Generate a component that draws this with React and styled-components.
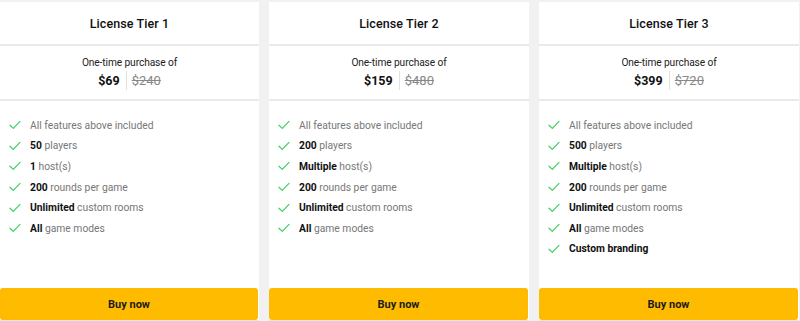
import { styled, createGlobalStyle } from "styled-components";

const GlobalStyle = createGlobalStyle`
  html, body {
    margin: 0;
    padding: 0;
    background: #f1f1f2;
    font-family: Roboto, "Liberation Sans", Arial, sans-serif;
  }
`;

const tiers = [
  {
    name: "License Tier 1",
    price: "$69",
    was: "$240",
    features: [
      [null, "All features above included"],
      ["50", "players"],
      ["1", "host(s)"],
      ["200", "rounds per game"],
      ["Unlimited", "custom rooms"],
      ["All", "game modes"],
    ],
  },
  {
    name: "License Tier 2",
    price: "$159",
    was: "$480",
    features: [
      [null, "All features above included"],
      ["200", "players"],
      ["Multiple", "host(s)"],
      ["200", "rounds per game"],
      ["Unlimited", "custom rooms"],
      ["All", "game modes"],
    ],
  },
  {
    name: "License Tier 3",
    price: "$399",
    was: "$720",
    features: [
      [null, "All features above included"],
      ["500", "players"],
      ["Multiple", "host(s)"],
      ["200", "rounds per game"],
      ["Unlimited", "custom rooms"],
      ["All", "game modes"],
      ["Custom branding", null],
    ],
  },
];

const Check = () => (
  <svg width="12" height="10" viewBox="0 0 12 10" fill="none">
    <path d="M1 5.2 L4.3 8.4 L11 1.4" stroke="#3fcf62" strokeWidth="1.2" strokeLinecap="round" strokeLinejoin="round" />
  </svg>
);

export default function App() {
  return (
    <>
      <GlobalStyle />
      <Plans>
        {tiers.map((t) => (
          <Card key={t.name}>
            <Title>{t.name}</Title>
            <PriceBlock>
              <Label>One-time purchase of</Label>
              <PriceRow>
                <Price>{t.price}</Price>
                <Was>{t.was}</Was>
              </PriceRow>
            </PriceBlock>
            <Features>
              {t.features.map(([strong, rest], i) => (
                <Feature key={i}>
                  <Check />
                  <span>
                    {strong && <b>{strong}</b>}
                    {strong && rest ? " " : ""}
                    {rest}
                  </span>
                </Feature>
              ))}
            </Features>
            <BuyButton>Buy now</BuyButton>
          </Card>
        ))}
      </Plans>
    </>
  );
}

const Plans = styled.div`
  display: grid;
  grid-template-columns: 259px 260px 260px;
  column-gap: 10px;
  padding-top: 2px;
  height: 319px;
  box-sizing: content-box;
`;

const Card = styled.div`
  display: flex;
  flex-direction: column;
  background: #fff;
  border-bottom: 1px solid #e3e8f3;
`;

const Title = styled.div`
  height: 42px;
  display: flex;
  align-items: center;
  justify-content: center;
  font-size: 12.5px;
  font-weight: 500;
  letter-spacing: 0.1px;
  color: #111;
  border-bottom: 2px solid #e9e9ef;
`;

const PriceBlock = styled.div`
  height: 55px;
  display: flex;
  flex-direction: column;
  align-items: center;
  padding-top: 11px;
  box-sizing: border-box;
  border-bottom: 2px solid #e9e9ef;
`;

const Label = styled.div`
  font-size: 10.2px;
  color: #222;
  letter-spacing: -0.1px;
`;

const PriceRow = styled.div`
  display: flex;
  align-items: center;
  margin-top: 3px;
`;

const Price = styled.span`
  font-size: 12.5px;
  font-weight: 700;
  color: #111;
  padding-right: 6px;
  border-right: 1px solid #e2e2e2;
  line-height: 19px;
`;

const Was = styled.span`
  font-size: 13px;
  color: #888;
  text-decoration: line-through;
  padding-left: 5px;
`;

const Features = styled.ul`
  flex: 1;
  list-style: none;
  margin: 0;
  padding: 14px 0 0 9px;
`;

const Feature = styled.li`
  display: flex;
  align-items: center;
  gap: 9px;
  height: 20.6px;
  font-size: 10.3px;
  color: #777;

  b {
    color: #111;
    font-weight: 700;
  }
`;

const BuyButton = styled.button`
  height: 32px;
  margin-right: 1px;
  border: none;
  border-radius: 3px;
  background: #ffbb00;
  color: #1b1b1b;
  font-family: inherit;
  font-size: 11px;
  font-weight: 700;
  cursor: pointer;
`;
